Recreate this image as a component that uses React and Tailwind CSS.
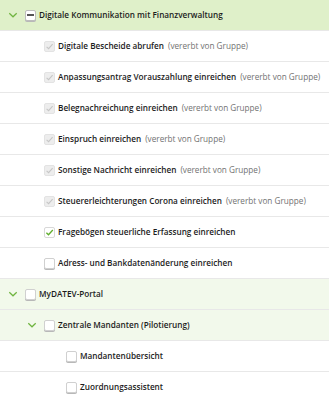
import React from 'react';

const rows = [
  { level: 0, type: 'group', label: 'Digitale Kommunikation mit Finanzverwaltung', state: 'partial', bg: 'bg-[#dff0c9]' },
  { level: 1, label: 'Digitale Bescheide abrufen', state: 'inherited', note: true },
  { level: 1, label: 'Anpassungsantrag Vorauszahlung einreichen', state: 'inherited', note: true },
  { level: 1, label: 'Belegnachreichung einreichen', state: 'inherited', note: true },
  { level: 1, label: 'Einspruch einreichen', state: 'inherited', note: true },
  { level: 1, label: 'Sonstige Nachricht einreichen', state: 'inherited', note: true },
  { level: 1, label: 'Steuererleichterungen Corona einreichen', state: 'inherited', note: true },
  { level: 1, label: 'Fragebögen steuerliche Erfassung einreichen', state: 'checked' },
  { level: 1, label: 'Adress- und Bankdatenänderung einreichen', state: 'empty' },
  { level: 0, type: 'group', label: 'MyDATEV-Portal', state: 'empty', bg: 'bg-[#f2f9eb]' },
  { level: 1, type: 'group', label: 'Zentrale Mandanten (Pilotierung)', state: 'empty', bg: 'bg-[#f2f9eb]' },
  { level: 2, label: 'Mandantenübersicht', state: 'empty' },
  { level: 2, label: 'Zuordnungsassistent', state: 'empty' },
];

function Chevron() {
  return (
    <svg width="10" height="10" viewBox="0 0 10 10" className="shrink-0">
      <path d="M1.3 3.3 L5 6.8 L8.7 3.3" fill="none" stroke="#6fb43f" strokeWidth="1.2" />
    </svg>
  );
}

function Box({ state }) {
  const base = 'ml-[6px] w-[11px] h-[11px] rounded-[2px] flex items-center justify-center shrink-0';
  if (state === 'inherited') {
    return (
      <span className={`${base} bg-[#ededed] border border-[#e3e3e3]`}>
        <svg width="9" height="9" viewBox="0 0 9 9">
          <path d="M1.6 4.8 L3.6 6.7 L7.6 2.2" fill="none" stroke="#c6c6c6" strokeWidth="1.1" />
        </svg>
      </span>
    );
  }
  if (state === 'checked') {
    return (
      <span className={`${base} bg-white border border-[#d8d8d8]`}>
        <svg width="9" height="9" viewBox="0 0 9 9">
          <path d="M1.4 4.8 L3.5 6.8 L7.8 2" fill="none" stroke="#5fae2d" strokeWidth="1.3" />
        </svg>
      </span>
    );
  }
  if (state === 'partial') {
    return (
      <span className={`${base} bg-white border border-[#bdbdbd] shadow-[0_1px_0_#b8b8b8]`}>
        <span className="w-[7px] h-[2px] bg-[#555]" />
      </span>
    );
  }
  return <span className={`${base} bg-white border border-[#d0d0d0] shadow-[0_1px_0_#b8b8b8]`} />;
}

const pad = { 0: 'pl-[6px]', 1: 'pl-[25px]', 2: 'pl-[47px]' };

export default function App() {
  return (
    <div className="w-[329px] h-[400px] overflow-hidden bg-white font-['Open_Sans',sans-serif] text-[8.2px] text-[#1c1c1c]">
      {rows.map((r, i) => (
        <div
          key={i}
          className={`h-[31px] flex items-center border-b border-[#e8e8e8] ${r.bg || 'bg-white'} ${pad[r.level]}`}
        >
          <span className="w-[13px] flex justify-center shrink-0">
            {r.type === 'group' ? <Chevron /> : null}
          </span>
          <Box state={r.state} />
          <span className="ml-[3px] font-semibold whitespace-nowrap shrink-0">{r.label}</span>
          {r.note && <span className="ml-[4px] text-[#727272] whitespace-nowrap shrink-0">(vererbt von Gruppe)</span>}
        </div>
      ))}
    </div>
  );
}
